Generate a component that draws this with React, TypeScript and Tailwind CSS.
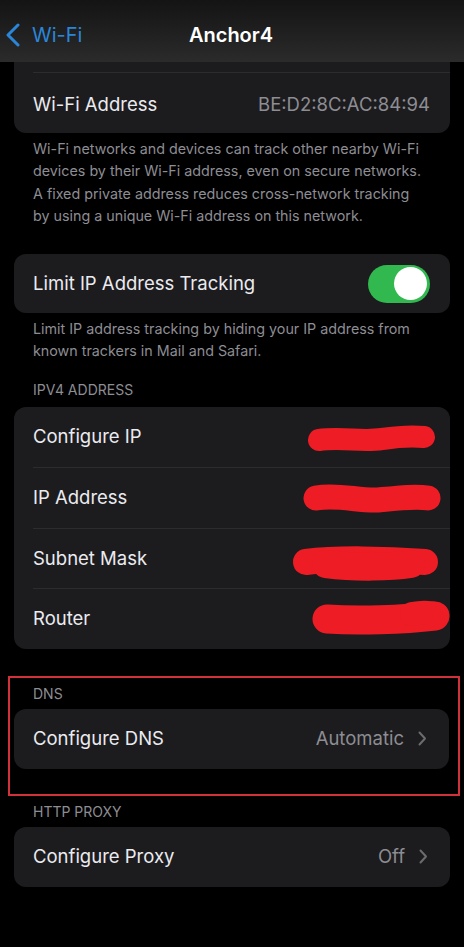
import React from 'react'

const font = { fontFamily: 'Inter, "Noto Sans", sans-serif' }

function Chevron() {
  return (
    <svg width="9" height="15" viewBox="0 0 9 15" className="ml-[14px] mr-[2px]">
      <path d="M1.5 1.5 L7 7.5 L1.5 13.5" fill="none" stroke="#6b6b70" strokeWidth="2" strokeLinecap="round" strokeLinejoin="round" />
    </svg>
  )
}

// red marker strokes that hide the values
function Scribble({ paths, w, h }: { paths: { d: string; sw: number }[]; w: number; h: number }) {
  return (
    <svg width={w} height={h} viewBox={`0 0 ${w} ${h}`} className="shrink-0">
      {paths.map((p, i) => (
        <path key={i} d={p.d} fill="none" stroke="#ee1c24" strokeWidth={p.sw} strokeLinecap="round" strokeLinejoin="round" />
      ))}
    </svg>
  )
}

const ipv4 = [
  {
    label: 'Configure IP', w: 129, h: 36, pad: 'pr-[14px] pt-[3px]',
    paths: [{ d: 'M12 19 C35 16 55 21 75 18 C95 15 108 15 117 16', sw: 22 }],
  },
  {
    label: 'IP Address', w: 138, h: 36, pad: 'pr-[9px] pt-[2px]',
    paths: [{ d: 'M13 17 C35 13 55 20 75 19 C95 17 112 15 125 17', sw: 25 }],
  },
  {
    label: 'Subnet Mask', w: 149, h: 40, pad: 'pr-[10px] pt-[9px]',
    paths: [
      { d: 'M15 19 C45 15 95 16 134 19', sw: 26 },
      { d: 'M35 21 C65 25 100 24 120 21', sw: 28 },
    ],
  },
  {
    label: 'Router', w: 138, h: 40, pad: 'pr-0 pb-[3px]',
    paths: [
      { d: 'M15 21 C45 23 90 22 123 18', sw: 29 },
      { d: 'M100 16 C110 14 118 14 125 17', sw: 24 },
    ],
  },
]

export default function App() {
  return (
    <div className="w-[464px] h-[947px] bg-black text-white overflow-hidden" style={font}>
      {/* nav bar */}
      <div className="h-[62px] bg-gradient-to-b from-[#141414] to-[#2b2b2b] relative flex items-center">
        <div className="flex items-center pl-[5px] pt-[8px] text-[#2a86d9]">
          <svg width="16" height="24" viewBox="0 0 16 24">
            <path d="M13 2 L3 12 L13 22" fill="none" stroke="#2a86d9" strokeWidth="3" strokeLinecap="round" strokeLinejoin="round" />
          </svg>
          <span className="ml-[11px] text-[20px]">Wi-Fi</span>
        </div>
        <div className="absolute inset-x-0 top-[8px] bottom-0 flex items-center justify-center">
          <span className="text-[20px] font-semibold ml-[-2px]">Anchor4</span>
        </div>
      </div>

      {/* wifi address card */}
      <div className="mx-[14px] bg-[#1c1c1e] rounded-b-[12px]">
        <div className="h-[10px]" />
        <div className="ml-[19px] border-t border-[#2c2c2e] h-[61px] flex items-center justify-between pr-[20px] pt-[3px]">
          <span className="text-[18.5px] text-[#ebebf0]">Wi-Fi Address</span>
          <span className="text-[18.5px] text-[#8d8d93]">BE:D2:8C:AC:84:94</span>
        </div>
      </div>
      <p className="mt-[5px] px-[33px] text-[14.3px] leading-[22.3px] text-[#8d8d93] whitespace-nowrap">
        Wi-Fi networks and devices can track other nearby Wi-Fi<br />
        devices by their Wi-Fi address, even on secure networks.<br />
        A fixed private address reduces cross-network tracking<br />
        by using a unique Wi-Fi address on this network.
      </p>

      {/* limit ip */}
      <div className="mt-[27px] mx-[14px] h-[59px] bg-[#1c1c1e] rounded-[12px] flex items-center justify-between pl-[19px] pr-[20px]">
        <span className="text-[18.5px] text-[#ebebf0]">Limit IP Address Tracking</span>
        <div className="w-[62px] h-[38px] rounded-full bg-[#31b94f] flex items-center justify-end pr-[3px]">
          <div className="w-[33px] h-[33px] rounded-full bg-white" />
        </div>
      </div>
      <p className="mt-[5px] px-[33px] text-[14.3px] leading-[22.3px] text-[#8d8d93] whitespace-nowrap">
        Limit IP address tracking by hiding your IP address from<br />
        known trackers in Mail and Safari.
      </p>

      {/* ipv4 */}
      <div className="mt-[18px] px-[33px] text-[14px] leading-[18px] text-[#8d8d93] uppercase">IPv4 Address</div>
      <div className="mt-[8px] mx-[14px] bg-[#1c1c1e] rounded-[12px]">
        {ipv4.map((r, i) => (
          <div key={r.label} className={`ml-[19px] h-[60.5px] flex items-center justify-between ${i > 0 ? 'border-t border-[#2c2c2e]' : ''}`}>
            <span className="text-[18.5px] text-[#ebebf0]">{r.label}</span>
            <div className={r.pad}>
              <Scribble paths={r.paths} w={r.w} h={r.h} />
            </div>
          </div>
        ))}
      </div>

      {/* dns, boxed */}
      <div className="mt-[27px] ml-[8px] mr-[4px] border-2 border-[#d1313a] pl-[4px] pr-[9px] pb-[25px]">
        <div className="pt-[7px] pl-[19px] text-[14px] leading-[18px] text-[#8d8d93]">DNS</div>
        <div className="mt-[6px] h-[60px] bg-[#1c1c1e] rounded-[12px] flex items-center justify-between pl-[19px] pr-[20px]">
          <span className="text-[18.5px] text-[#ebebf0]">Configure DNS</span>
          <div className="flex items-center">
            <span className="text-[18.5px] text-[#8d8d93]">Automatic</span>
            <Chevron />
          </div>
        </div>
      </div>

      {/* proxy */}
      <div className="mt-[7px] px-[33px] text-[14px] leading-[18px] text-[#8d8d93]">HTTP PROXY</div>
      <div className="mt-[6px] mx-[14px] h-[60px] bg-[#1c1c1e] rounded-[12px] flex items-center justify-between pl-[19px] pr-[20px]">
        <span className="text-[18.5px] text-[#ebebf0]">Configure Proxy</span>
        <div className="flex items-center">
          <span className="text-[18.5px] text-[#8d8d93]">Off</span>
          <Chevron />
        </div>
      </div>
    </div>
  )
}
